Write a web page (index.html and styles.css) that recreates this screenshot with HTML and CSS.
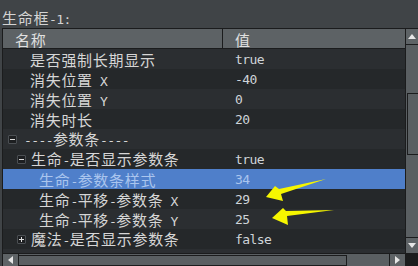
FILE: index.html
```html
<!DOCTYPE html>
<html>
<head>
<meta charset="utf-8">
<link rel="stylesheet" href="styles.css">
</head>
<body>
<div class="title">生命框<span class="m">-1:</span></div>
<div class="frame">
  <div class="view">
    <div class="head">
      <div class="c1">名称</div>
      <div class="c2">值</div>
    </div>
    <div class="row lt"><div class="c1 leaf1">是否强制长期显示</div><div class="c2 m">true</div></div>
    <div class="row dk"><div class="c1 leaf1">消失位置<span class="m"> X</span></div><div class="c2 m">-40</div></div>
    <div class="row lt"><div class="c1 leaf1">消失位置<span class="m"> Y</span></div><div class="c2 m">0</div></div>
    <div class="row dk"><div class="c1 leaf1">消失时长</div><div class="c2 m">20</div></div>
    <div class="row lt"><div class="c1 n0"><span class="box minus"></span><span><span class="m">----</span>参数条<span class="m">----</span></span></div><div class="c2 m"></div></div>
    <div class="row dk"><div class="c1 n1"><span class="box minus"></span><span>生命<span class="m">-</span>是否显示参数条</span></div><div class="c2 m">true</div></div>
    <div class="row sel"><div class="c1 leaf2">生命<span class="m">-</span>参数条样式</div><div class="c2 m">34</div></div>
    <div class="row dk"><div class="c1 leaf2">生命<span class="m">-</span>平移<span class="m">-</span>参数条<span class="m"> X</span></div><div class="c2 m">29</div></div>
    <div class="row lt"><div class="c1 leaf2">生命<span class="m">-</span>平移<span class="m">-</span>参数条<span class="m"> Y</span></div><div class="c2 m">25</div></div>
    <div class="row dk"><div class="c1 n1"><span class="box plus"></span><span>魔法<span class="m">-</span>是否显示参数条</span></div><div class="c2 m">false</div></div>
    <div class="row lt"><div class="c1"></div><div class="c2"></div></div>
  </div>
  <div class="vscroll">
    <div class="vbtn up"><svg width="8" height="5" viewBox="0 0 8 5"><polygon points="0,5 4,0 8,5" fill="#e6e6e6"/></svg></div>
    <div class="vtrack"><div class="vthumb"></div></div>
    <div class="vbtn down"><svg width="8" height="5" viewBox="0 0 8 5"><polygon points="0,0 8,0 4,5" fill="#e6e6e6"/></svg></div>
  </div>
  <div class="hscroll">
    <div class="hbtn left"><svg width="5" height="8" viewBox="0 0 5 8"><polygon points="5,0 5,8 0,4" fill="#e6e6e6"/></svg></div>
    <div class="htrack"><div class="hthumb"></div></div>
    <div class="hbtn right"><svg width="5" height="8" viewBox="0 0 5 8"><polygon points="0,0 5,4 0,8" fill="#e6e6e6"/></svg></div>
  </div>
  <div class="corner"></div>
</div>
<svg class="arrows" width="418" height="266" viewBox="0 0 418 266">
  <polygon points="266,197 275,186 279,189 326,179 281,194 283,201" fill="#f6f600"/>
  <polygon points="272,218 283,208 286,211 334,210 287,216 288,225" fill="#f6f600"/>
</svg>
</body>
</html>
```

FILE: styles.css
```css
* { box-sizing: border-box; }
html, body {
  margin: 0;
  padding: 0;
}
body {
  width: 418px;
  height: 266px;
  overflow: hidden;
  background: #404447;
  font-family: "Noto Sans CJK SC", "Noto Sans", sans-serif;
  font-size: 15px;
  letter-spacing: 0.7px;
  color: #d6d6d6;
  position: relative;
}
.m {
  font-family: "DejaVu Sans Mono", monospace;
  font-size: 13px;
  letter-spacing: -0.6px;
}
.title {
  height: 28px;
  padding: 8px 0 0 2px;
  line-height: 20px;
  color: #d4d4d4;
  white-space: nowrap;
}
.frame {
  margin-left: 2px;
  border-left: 1px solid #1b1c1d;
  border-top: 1px solid #1b1c1d;
  display: grid;
  grid-template-columns: 402px 13px;
  grid-template-rows: 224px 13px;
}
.view {
  overflow: hidden;
  background: #25282a;
}
.head {
  display: flex;
  height: 20px;
  background: #5d6265;
  border-bottom: 1px solid #1b1c1d;
  color: #e0e0e0;
  line-height: 19px;
}
.head .c1 {
  width: 220px;
  padding-left: 12px;
  padding-top: 1px;
  border-right: 1px solid #1b1c1d;
}
.head .c2 {
  padding-left: 12px;
  padding-top: 1px;
}
.row {
  display: flex;
  height: 20px;
  line-height: 19px;
  white-space: pre;
}
.row.lt { background: #2b2e31; }
.row.dk { background: #25282a; }
.row.sel { background: #4f7fca; color: #aac5ee; }
.row .c1 {
  width: 220px;
  padding-top: 1px;
  flex: none;
}
.row .c2 {
  padding-left: 12px;
  padding-top: 1px;
  color: #cfd4d9;
}
.row.sel .c2 { color: #aac5ee; }
.leaf1 { padding-left: 27px; }
.leaf2 { padding-left: 36px; }
.n0, .n1 {
  display: flex;
  align-items: center;
}
.n0 { padding-left: 5px; gap: 7px; }
.n1 { padding-left: 14px; gap: 5px; }
.box {
  width: 9px;
  height: 9px;
  flex: none;
  background: #1d1f21;
  border: 1px solid #4b4f53;
  border-radius: 1px;
  position: relative;
  margin-top: -1px;
}
.box::before {
  content: "";
  position: absolute;
  left: 1px;
  top: 3px;
  width: 5px;
  height: 1px;
  background: #e0e0e0;
}
.box.plus::after {
  content: "";
  position: absolute;
  left: 3px;
  top: 1px;
  width: 1px;
  height: 5px;
  background: #e0e0e0;
}
.vscroll {
  border-left: 1px solid #1b1c1d;
  background: #5a5f62;
  display: flex;
  flex-direction: column;
}
.vbtn {
  height: 16px;
  display: flex;
  align-items: center;
  justify-content: center;
  background: #5e6366;
  flex: none;
}
.vbtn.up { border-bottom: 1px solid #1b1c1d; }
.vbtn.down { border-top: 1px solid #1b1c1d; }
.vtrack {
  flex: 1;
  padding-top: 48px;
  padding-left: 1px;
}
.vthumb {
  height: 62px;
  border: 1px solid #1b1c1d;
  border-right: none;
  background: #5a5f62;
}
.hscroll {
  border-top: 1px solid #1b1c1d;
  background: #5a5f62;
  display: flex;
}
.hbtn {
  width: 16px;
  display: flex;
  align-items: center;
  justify-content: center;
  background: #5e6366;
  flex: none;
}
.hbtn.left { border-right: 1px solid #1b1c1d; }
.hbtn.right { border-left: 1px solid #1b1c1d; }
.htrack {
  flex: 1;
  padding-top: 1px;
}
.hthumb {
  width: 328px;
  height: 11px;
  border: 1px solid #1b1c1d;
  border-left: none;
  background: #5a5f62;
}
.corner {
  background: #1b1c1d;
}
.arrows {
  position: absolute;
  left: 0;
  top: 0;
  pointer-events: none;
}
```
